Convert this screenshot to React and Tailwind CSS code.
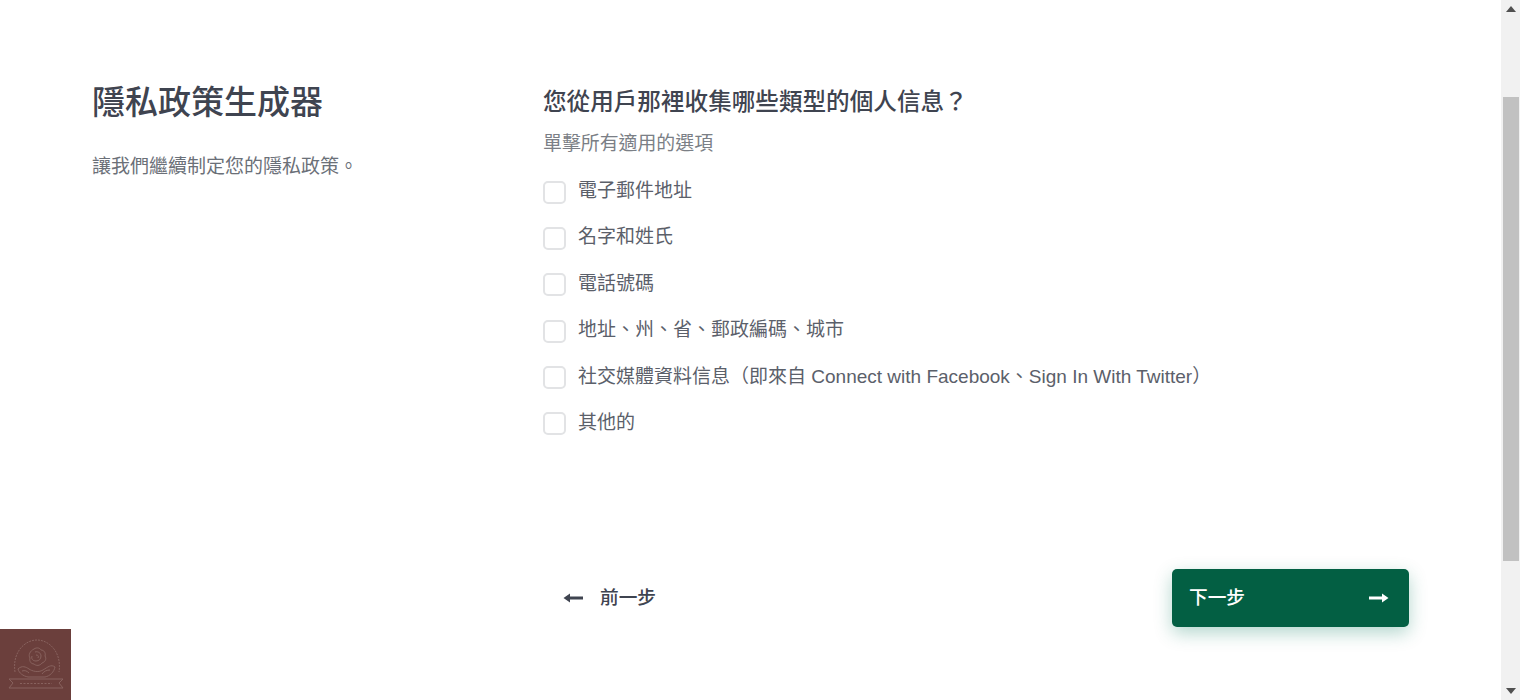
// App.jsx
import React from "react";

const options = [
  "電子郵件地址",
  "名字和姓氏",
  "電話號碼",
  "地址、州、省、郵政編碼、城市",
  "社交媒體資料信息（即來自 Connect with Facebook、Sign In With Twitter）",
  "其他的",
];

const font = "font-['Liberation_Sans','Noto_Sans_CJK_TC',sans-serif]";

const Arrow = ({ left }) => (
  <svg width="20" height="12" viewBox="0 0 20 12" fill="currentColor" className={left ? "rotate-180" : ""}>
    <path d="M0 4.500h13V1.500L19.500 6 13 10.500V7.500H0z" />
  </svg>
);

const Logo = () => (
  <svg width="56" height="54" viewBox="0 0 56 54" fill="none" stroke="#88625e" strokeWidth="1">
    <path d="M7 34C4 14 17 2 29 2s25 12 22 32" strokeDasharray="2 1" />
    <path d="M26 11c3-2 6-1 7 1 3 0 5 3 4 6 2 3 0 6-3 7-2 3-6 3-8 1-3 0-5-3-4-6-2-3 0-7 4-9z" />
    <path d="M27 14c3-1 6 1 6 4s-2 5-5 5-5-2-4-5M28 17c2 0 3 1 2 3" />
    <path d="M10 31c4-4 8-2 11 0s9 4 14 1 8-6 12-3c-1 5-5 9-10 10H20c-5-1-9-4-10-8z" />
    <path d="M14 33c3-1 5 0 7 2M34 36c2-3 5-4 8-4" />
    <path d="M1 41h54l-4 4 4 5H1l4-5z" />
    <path d="M12 45.500h32" strokeDasharray="2 1.500" />
  </svg>
);

const App = () => {
  return (
    <div lang="zh-Hant" className={`relative flex h-[700px] overflow-hidden bg-white ${font}`}>
      <main className="flex-1 pl-[92px] pr-[92px] pt-[81px]">
        <div className="flex">
          <section className="w-[451px] shrink-0">
            <h1 className="text-[33px] leading-[44px] font-medium text-[#3f4450]">隱私政策生成器</h1>
            <p className="mt-[29px] text-[19px] leading-[26px] text-[#6b7078]">讓我們繼續制定您的隱私政策。</p>
          </section>

          <section className="flex-1">
            <h2 className="text-[23.600px] leading-[42px] font-medium text-[#3f4450]">
              您從用戶那裡收集哪些類型的個人信息？
            </h2>
            <p className="mt-[8px] text-[18.900px] leading-[26px] text-[#7b7f86]">單擊所有適用的選項</p>

            <ul className="mt-[20px] flex flex-col gap-[18.400px]">
              {options.map((opt) => (
                <li key={opt} className="flex h-[28px] items-center">
                  <span className="mt-[2px] h-[23px] w-[23px] shrink-0 rounded-[5px] border-2 border-[#e2e3e5] bg-white" />
                  <span className="ml-[12px] whitespace-nowrap text-[19px] leading-[26px] text-[#5b606a]">{opt}</span>
                </li>
              ))}
            </ul>

            <div className="mt-[132px] flex items-center justify-between">
              <button className="flex items-center gap-[17px] pl-[20px] text-[18.700px] font-medium text-[#3f4450]">
                <Arrow left />
                前一步
              </button>
              <button className="flex h-[58px] w-[237px] items-center justify-between rounded-[5px] bg-[#035f43] pl-[17px] pr-[20px] text-[18.700px] font-medium text-white shadow-[0_6px_18px_rgba(3,120,90,0.3)]">
                下一步
                <Arrow />
              </button>
            </div>
          </section>
        </div>
      </main>

      {/* scrollbar */}
      <div className="flex w-[19px] shrink-0 flex-col items-center bg-[#f1f1f1]">
        <svg width="10" height="6" viewBox="0 0 10 6" fill="#505050" className="mt-[6px]"><path d="M5 0l5 6H0z" /></svg>
        <div className="mt-[85px] h-[464px] w-[16px] bg-[#c1c1c1]" />
        <svg width="10" height="6" viewBox="0 0 10 6" fill="#505050" className="mt-[127px]"><path d="M0 0h10L5 6z" /></svg>
      </div>

      <div className="absolute bottom-0 left-0 flex h-[71px] w-[71px] items-center justify-center bg-[#6b3f3c]">
        <Logo />
      </div>
    </div>
  );
};

export default App;
